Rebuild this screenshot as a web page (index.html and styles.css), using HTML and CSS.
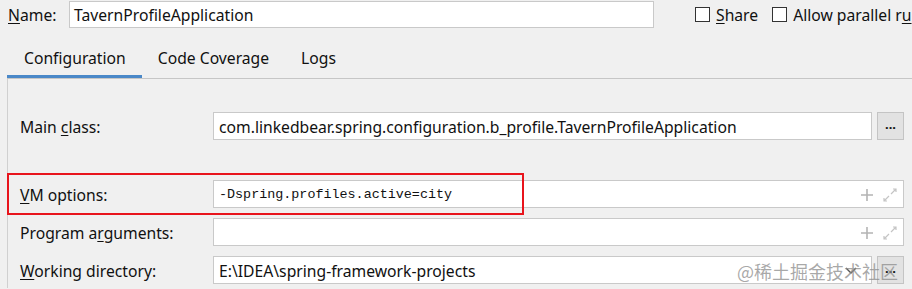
FILE: index.html
```html
<!DOCTYPE html>
<html lang="en">
<head>
<meta charset="UTF-8">
<meta name="viewport" content="width=device-width, initial-scale=1.0">
<title>Run Configuration</title>
<link rel="stylesheet" href="styles.css">
</head>
<body>

<div id="top">
    <span class="name-label"><u>N</u>ame:</span>
    <div class="field name-field">TavernProfileApplication</div>
    <label class="check"><span class="box"></span><u>S</u>hare</label>
    <label class="check"><span class="box"></span>Allow parallel r<u>u</u>n</label>
</div>

<div id="tabs">
    <div class="tab active">Configuration</div>
    <div class="tab">Code Coverage</div>
    <div class="tab">Logs</div>
</div>

<div id="panel">
    <div class="row main-row">
        <span class="label">Main <u>c</u>lass:</span>
        <div class="field">com.linkedbear.spring.configuration.b_profile.TavernProfileApplication</div>
        <div class="dots">...</div>
    </div>

    <div class="row vm-row">
        <span class="label"><u>V</u>M options:</span>
        <div class="field wide mono">
            -Dspring.profiles.active=city
            <span class="icons">
                <svg width="14" height="14" viewBox="0 0 14 14"><path d="M7 1v12M1 7h12" stroke="#b4b4b4" stroke-width="1.6"/></svg>
                <svg width="14" height="14" viewBox="0 0 14 14"><path d="M8 6l5-5M10 1h3v3M6 8l-5 5M1 10v3h3" stroke="#c4c4c4" stroke-width="1.2" fill="none"/></svg>
            </span>
        </div>
    </div>

    <div class="row">
        <span class="label">Program a<u>r</u>guments:</span>
        <div class="field wide">
            <span class="icons">
                <svg width="14" height="14" viewBox="0 0 14 14"><path d="M7 1v12M1 7h12" stroke="#b4b4b4" stroke-width="1.6"/></svg>
                <svg width="14" height="14" viewBox="0 0 14 14"><path d="M8 6l5-5M10 1h3v3M6 8l-5 5M1 10v3h3" stroke="#c4c4c4" stroke-width="1.2" fill="none"/></svg>
            </span>
        </div>
    </div>

    <div class="row">
        <span class="label"><u>W</u>orking directory:</span>
        <div class="field">E:\IDEA\spring-framework-projects
            <svg class="chevron" width="12" height="8" viewBox="0 0 12 8"><path d="M1 1l5 5 5-5" stroke="#555" stroke-width="1.4" fill="none"/></svg>
        </div>
        <div class="dots">...</div>
    </div>

    <div class="highlight"></div>
</div>

<div class="watermark">@稀土掘金技术社区</div>

</body>
</html>
```

FILE: styles.css
```css
body {
    margin: 0;
    background-color: #f0f0f0;
    font-family: "Noto Sans", "Open Sans", sans-serif;
    font-size: 15.7px;
    color: #111;
    width: 912px;
    height: 289px;
    overflow: hidden;
    position: relative;
}

u {
    text-decoration-thickness: 1px;
    text-underline-offset: 2px;
}

#top {
    display: flex;
    align-items: center;
    height: 27px;
    padding-top: 1px;
    overflow: hidden;
    white-space: nowrap;
}

#top > * {
    flex-shrink: 0;
}

.name-label {
    margin-left: 8px;
    width: 61px;
}

.field {
    display: flex;
    align-items: center;
    height: 26px;
    padding-left: 4px;
    background-color: white;
    border: 1px solid #c9c9c9;
    white-space: nowrap;
    overflow: hidden;
    box-sizing: border-box;
    position: relative;
}

.name-field {
    width: 585px;
    height: 27px;
    margin-right: 41px;
}

.check {
    display: flex;
    align-items: center;
    margin-right: 14px;
}

.box {
    width: 13px;
    height: 13px;
    border: 1px solid #333;
    background-color: white;
    margin-right: 6px;
}

#tabs {
    display: flex;
    margin: 7px 0 0 7px;
    border-bottom: 1px solid #c6c6c6;
}

.tab {
    height: 43px;
    box-sizing: border-box;
    padding: 5px 16px 0 16px;
    line-height: 36px;
}

.tab.active {
    padding-left: 17px;
    box-shadow: inset 0 -3px 0 #4a88c8;
}

#panel {
    margin-left: 7px;
    border-left: 1px solid #d0d0d0;
    padding: 33px 0 0 12px;
    height: 176px;
    position: relative;
}

.row {
    display: flex;
    align-items: center;
    height: 28px;
    margin-bottom: 10px;
}

.row > * {
    flex-shrink: 0;
}

.main-row {
    margin-bottom: 40px;
}

.label {
    width: 193px;
    padding-top: 2px;
}

.row .field {
    height: 28px;
    width: 659px;
    padding-left: 5px;
    padding-top: 1px;
}

.row .field.wide {
    width: 691px;
}

.mono {
    font-family: "Liberation Mono", monospace;
    font-size: 13.4px;
}

.icons {
    position: absolute;
    right: 6px;
    top: 7px;
    display: flex;
    gap: 9px;
}

.chevron {
    position: absolute;
    right: 14px;
    top: 10px;
}

.dots {
    width: 27px;
    height: 28px;
    margin-left: 5px;
    box-sizing: border-box;
    border: 1px solid #c4c4c4;
    background-color: #e2e2e2;
    text-align: center;
    line-height: 22px;
    font-weight: bold;
    font-size: 13px;
}

.highlight {
    position: absolute;
    left: -1px;
    top: 94px;
    width: 513px;
    height: 38px;
    border: 2px solid #e8141c;
}

.watermark {
    position: absolute;
    right: 14px;
    top: 258px;
    font-family: "Noto Sans CJK SC", sans-serif;
    font-size: 18px;
    color: rgba(140, 140, 140, 0.75);
}
```
